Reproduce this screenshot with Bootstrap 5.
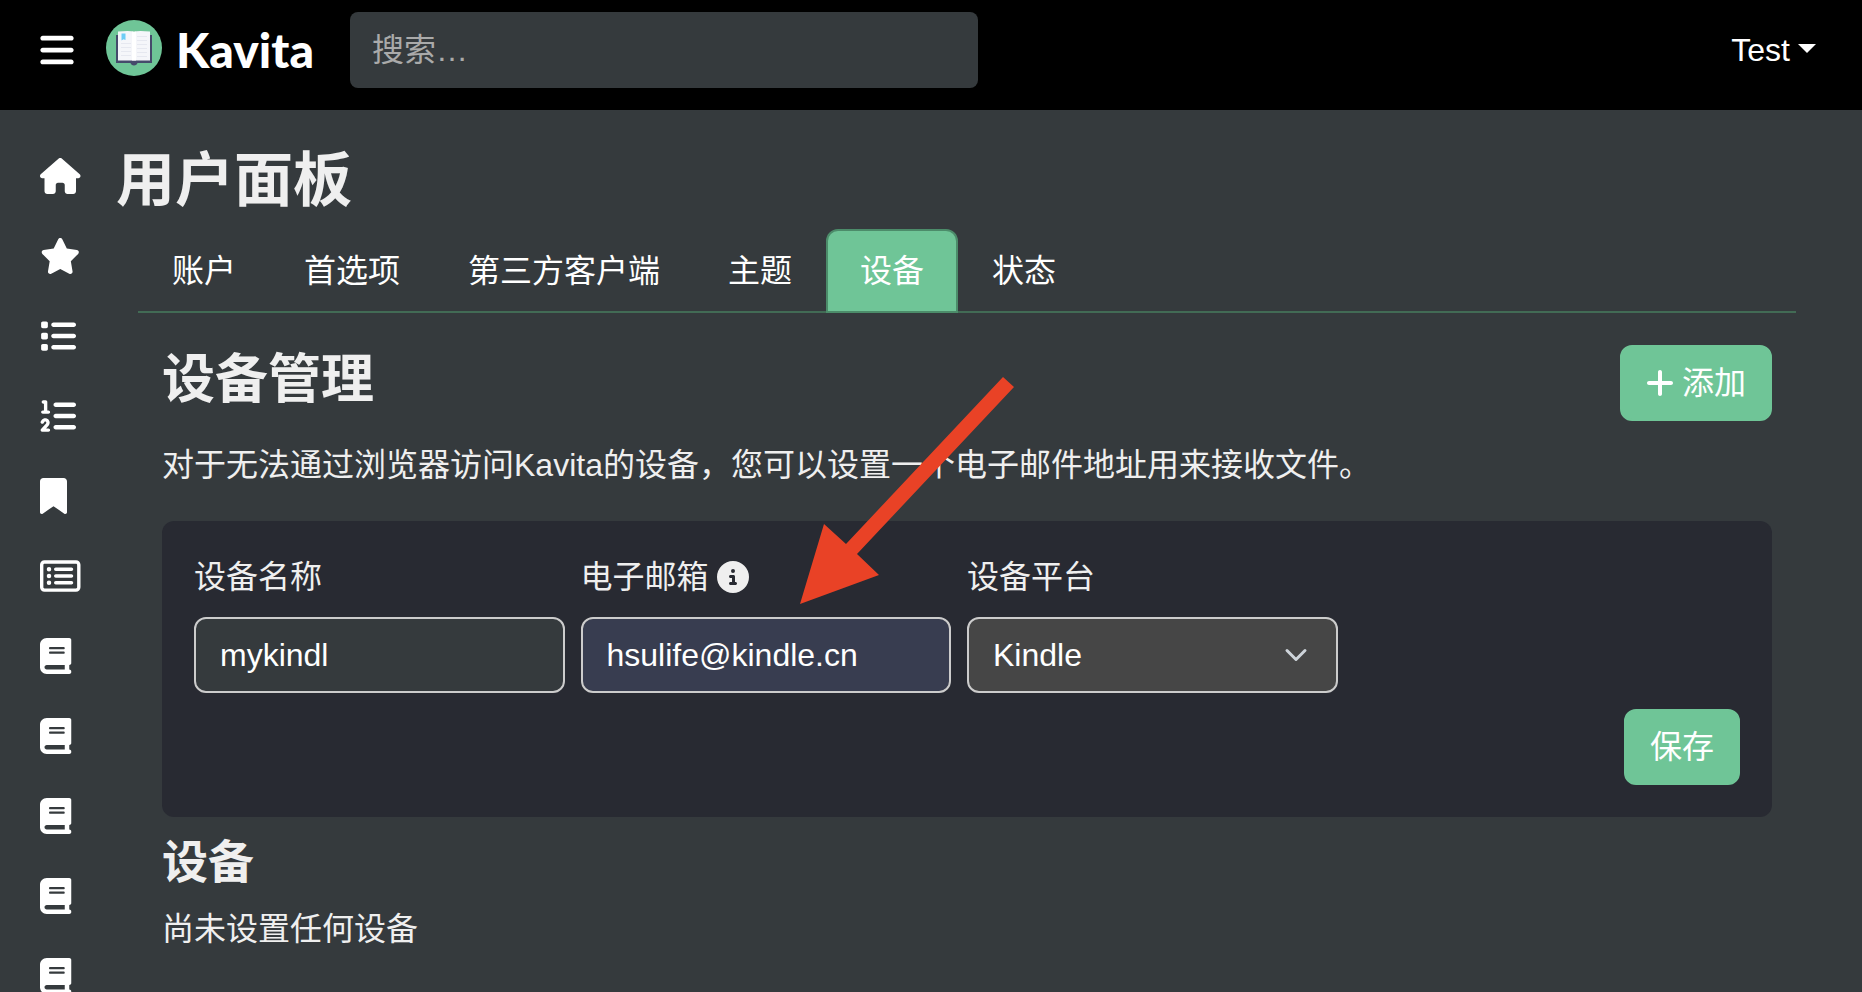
<!DOCTYPE html>
<html lang="zh-CN">
<head>
<meta charset="utf-8">
<meta name="viewport" content="width=device-width, initial-scale=1">
<title>Kavita - 用户面板</title>
<link href="https://cdn.jsdelivr.net/npm/bootstrap@5.3.0/dist/css/bootstrap.min.css" rel="stylesheet">
<style>
  :root { font-size: 32px; --kv-green: #6fc597; --kv-bg: #353a3d; --kv-text: #efefef; }
  body {
    font-family: "Liberation Sans", "Noto Sans CJK SC", sans-serif;
    background: var(--kv-bg); color: var(--kv-text); line-height: 48px;
  }
  .topbar { background: #000; padding: 12px 46px 22px 40px; }
  .menu-btn { width: 66px; color: #fff; line-height: 1; }
  .menu-btn svg { height: 38px; width: 34px; }
  .brand-link { flex: 0 0 244px; gap: 14px; padding-bottom: 4px; color: #fff; font: 900 48px/56px Lato, sans-serif; }
  .brand-link svg { width: 56px; height: 56px; }
  .brand-link span { padding-top: 4px; }
  .search-box { flex: 0 1 628px; }
  .form-control, .form-select { height: 76px; padding: 0 24px; border: 2px solid #ccc; border-radius: 12px; color: #fff; background-color: var(--kv-bg); }
  .form-control:focus { background-color: var(--kv-bg); color: #fff; }
  .search-box .form-control { border: 0; border-radius: 8px; padding: 0 22px; }
  .form-control::placeholder { color: #aaa; }
  .user-btn { color: #fff; line-height: 48px; }
  .side-nav { flex: 0 0 116px; padding: 26px 0 0 40px; }
  .side-nav a { display: flex; align-items: center; height: 80px; color: #fff; }
  .side-nav svg { height: 36px; }
  svg { fill: currentColor; display: block; }
  .page-title { font-size: 59px; line-height: 72px; font-weight: 700; margin-bottom: 12px; }
  .content { padding: 35px 66px 0 0; }
  .tab-area { padding-left: 22px; }
  .nav-tabs { border-bottom: 2px solid #426b55; }
  .nav-tabs .nav-link { color: #fff; border: 2px solid transparent; margin-bottom: -2px; padding: 16px 32px; border-radius: 12px 12px 0 0; }
  .nav-tabs .nav-link.active { background: var(--kv-green); border-color: #4c8c6a; color: #fff; }
  .panel { padding: 32px 24px; }
  .panel h3 { font-size: 53px; line-height: 70px; font-weight: 700; }
  .panel h4 { font-size: 46px; line-height: 58px; font-weight: 700; margin: 16px 0 14px; }
  .intro { margin: 20px 0 32px; }
  .btn-kv { --bs-btn-color: #fff; --bs-btn-bg: var(--kv-green); --bs-btn-border-color: var(--kv-green); --bs-btn-hover-color: #fff; --bs-btn-hover-bg: #5bb386; border-width: 2px; padding: 12px 24px; line-height: 48px; border-radius: 12px; }
  .btn-kv svg { width: 28px; height: 32px; }
  .device-form { background: #282a32; border-radius: 12px; padding: 32px; }
  .device-form label { margin-bottom: 16px; }
  .email-field { background-color: #383d50; }
  .form-select {
    background-color: #464646;
    background-image: url("data:image/svg+xml,%3csvg xmlns='http://www.w3.org/2000/svg' viewBox='0 0 16 16'%3e%3cpath fill='none' stroke='%23ced4da' stroke-linecap='round' stroke-linejoin='round' stroke-width='2' d='m2 5 6 6 6-6'/%3e%3c/svg%3e");
    background-size: 32px 24px;
  }
  .info-icon { width: 32px; height: 32px; }
  .pointer-arrow { position: absolute; left: 219px; bottom: 89px; width: 214px; height: 227px; z-index: 5; pointer-events: none; fill: #e94226; }
</style>
</head>
<body class="vh-100 overflow-hidden d-flex flex-column">

<svg class="d-none" aria-hidden="true">
  <symbol id="i-book" viewBox="0 0 448 512"><path d="M96 0C43 0 0 43 0 96V416c0 53 43 96 96 96H384h32c17.700 0 32-14.300 32-32s-14.300-32-32-32V384c17.700 0 32-14.300 32-32V32c0-17.700-14.300-32-32-32H384 96zm0 384H352v64H96c-17.700 0-32-14.300-32-32s14.300-32 32-32zm32-240c0-8.800 7.200-16 16-16H336c8.800 0 16 7.200 16 16s-7.200 16-16 16H144c-8.800 0-16-7.200-16-16zm16 48H336c8.800 0 16 7.200 16 16s-7.200 16-16 16H144c-8.800 0-16-7.200-16-16s7.200-16 16-16z"/></symbol>
</svg>

<header class="topbar d-flex align-items-center">
  <button class="menu-btn btn p-0 border-0 text-start" type="button" aria-label="菜单">
    <svg viewBox="0 0 448 512"><path d="M0 96C0 78.300 14.300 64 32 64H416c17.700 0 32 14.300 32 32s-14.300 32-32 32H32C14.300 128 0 113.700 0 96zM0 256c0-17.700 14.300-32 32-32H416c17.700 0 32 14.300 32 32s-14.300 32-32 32H32c-17.700 0-32-14.300-32-32zM448 416c0 17.700-14.300 32-32 32H32c-17.700 0-32-14.300-32-32s14.300-32 32-32H416c17.700 0 32 14.300 32 32z"/></svg>
  </button>
  <a class="brand-link d-flex align-items-center text-decoration-none" href="#">
    <svg viewBox="0 0 56 56" aria-hidden="true">
      <circle cx="28" cy="28" r="28" fill="#6fc597"/>
      <path d="M10 15h36v28H31.500c-.5 1.500-1.500 2.500-3.500 2.500s-3-1-3.500-2.500H10z" fill="#454a6b"/>
      <path d="M12 11.500q11-1 16 0 5-1 16 0V40.500H12z" fill="#f5f6fa"/>
      <path d="M26 11.500l2 .7 2-.7V40.500h-4z" fill="#fff"/>
      <path d="M15.500 13.500h4V20l-2-.8-2 1.300z" fill="#6fcdf5"/>
      <path d="M15 23.500h10M15 27.500h10M15 31.500h10M15 35.500h10M31 16.500h10M31 20.500h10M31 24.500h10M31 28.500h10M31 32.500h10M31 36.500h10" stroke="#e6e8f0" stroke-width="1" fill="none"/>
    </svg>
    <span>Kavita</span>
  </a>
  <form class="search-box" role="search">
    <input class="form-control" type="search" placeholder="搜索…" aria-label="搜索">
  </form>
  <button class="user-btn btn p-0 border-0 dropdown-toggle ms-auto" type="button" data-bs-toggle="dropdown" aria-expanded="false">Test</button>
</header>

<div class="d-flex flex-grow-1 overflow-hidden">
  <nav class="side-nav" aria-label="侧边栏">
    <a href="#" aria-label="主页"><svg viewBox="0 0 576 512"><path d="M575.800 255.500c0 18-15 32.100-32 32.100h-32l.7 160.200c0 2.700-.2 5.400-.5 8.100V472c0 22.100-17.900 40-40 40H456c-1.100 0-2.200 0-3.300-.1c-1.400 .1-2.800 .1-4.200 .1H416 392c-22.100 0-40-17.900-40-40V448 384c0-17.700-14.300-32-32-32H256c-17.700 0-32 14.300-32 32v64 24c0 22.100-17.900 40-40 40H160 128.100c-1.500 0-3-.1-4.500-.2c-1.200 .1-2.400 .2-3.600 .2H104c-22.100 0-40-17.900-40-40V360c0-.9 0-1.900 .1-2.800V287.600H32c-18 0-32-14-32-32.100c0-9 3-17 10-24L266.400 8c7-7 15-8 22-8s15 2 21 7L564.800 231.500c8 7 12 15 11 24z"/></svg></a>
    <a href="#" aria-label="想读"><svg viewBox="0 0 576 512"><path d="M316.900 18C311.600 7 300.400 0 288.100 0s-23.400 7-28.800 18L195 150.300 51.400 171.500c-12 1.800-22 10.200-25.700 21.700s-.7 24.200 7.900 32.700L137.800 329 113.200 474.700c-2 12 3 24.200 12.900 31.300s23 8 33.800 2.300l128.300-68.500 128.300 68.500c10.800 5.700 23.900 4.900 33.800-2.300s14.900-19.300 12.900-31.300L438.500 329 542.700 225.900c8.600-8.500 11.700-21.200 7.900-32.700s-13.700-19.900-25.700-21.700L381.200 150.300 316.900 18z"/></svg></a>
    <a href="#" aria-label="收藏"><svg viewBox="0 0 512 512"><path d="M40 48C26.700 48 16 58.700 16 72v48c0 13.300 10.700 24 24 24H88c13.300 0 24-10.700 24-24V72c0-13.300-10.700-24-24-24H40zM192 64c-17.700 0-32 14.300-32 32s14.300 32 32 32H480c17.700 0 32-14.300 32-32s-14.300-32-32-32H192zm0 160c-17.700 0-32 14.300-32 32s14.300 32 32 32H480c17.700 0 32-14.300 32-32s-14.300-32-32-32H192zm0 160c-17.700 0-32 14.300-32 32s14.300 32 32 32H480c17.700 0 32-14.300 32-32s-14.300-32-32-32H192zM16 232v48c0 13.300 10.700 24 24 24H88c13.300 0 24-10.700 24-24V232c0-13.300-10.700-24-24-24H40c-13.300 0-24 10.700-24 24zM40 368c-13.300 0-24 10.700-24 24v48c0 13.300 10.700 24 24 24H88c13.300 0 24-10.700 24-24V392c0-13.300-10.700-24-24-24H40z"/></svg></a>
    <a href="#" aria-label="阅读清单"><svg viewBox="0 0 512 512"><path d="M24 56c0-13.300 10.700-24 24-24H80c13.300 0 24 10.700 24 24V176h16c13.300 0 24 10.700 24 24s-10.700 24-24 24H40c-13.300 0-24-10.700-24-24s10.700-24 24-24H56V80H48C34.700 80 24 69.300 24 56zM86.700 341.200c-6.500-7.400-18.300-6.900-24 1.200L51.500 357.900c-7.700 10.800-22.700 13.300-33.500 5.600s-13.300-22.700-5.600-33.500l11.100-15.600c23.700-33.200 72.300-35.600 99.200-4.900c21.300 24.400 20.800 60.900-1.100 84.700L86.800 432H120c13.300 0 24 10.700 24 24s-10.700 24-24 24H32c-9.500 0-18.200-5.600-22-14.400s-2.100-18.900 4.300-25.900l72-78c5.300-5.800 5.400-14.600 .3-20.500zM224 64H480c17.700 0 32 14.300 32 32s-14.300 32-32 32H224c-17.700 0-32-14.300-32-32s14.300-32 32-32zm0 160H480c17.700 0 32 14.300 32 32s-14.300 32-32 32H224c-17.700 0-32-14.300-32-32s14.300-32 32-32zm0 160H480c17.700 0 32 14.300 32 32s-14.300 32-32 32H224c-17.700 0-32-14.300-32-32s14.300-32 32-32z"/></svg></a>
    <a href="#" aria-label="书签"><svg viewBox="0 0 384 512"><path d="M0 48V487.700C0 501.100 10.900 512 24.300 512c5 0 9.900-1.500 14-4.400L192 400 345.700 507.600c4.100 2.900 9 4.400 14 4.400c13.400 0 24.300-10.900 24.300-24.300V48c0-26.500-21.500-48-48-48H48C21.500 0 0 21.500 0 48z"/></svg></a>
    <a href="#" aria-label="所有系列"><svg viewBox="0 0 576 512"><path d="M64 80c-8.800 0-16 7.200-16 16V416c0 8.800 7.200 16 16 16H512c8.800 0 16-7.200 16-16V96c0-8.800-7.200-16-16-16H64zM0 96C0 60.700 28.700 32 64 32H512c35.300 0 64 28.700 64 64V416c0 35.300-28.700 64-64 64H64c-35.300 0-64-28.700-64-64V96zm96 64a32 32 0 1 1 64 0 32 32 0 1 1 -64 0zm104 0c0-13.300 10.700-24 24-24H448c13.300 0 24 10.700 24 24s-10.700 24-24 24H224c-13.300 0-24-10.700-24-24zm0 96c0-13.300 10.700-24 24-24H448c13.300 0 24 10.700 24 24s-10.700 24-24 24H224c-13.300 0-24-10.700-24-24zm0 96c0-13.300 10.700-24 24-24H448c13.300 0 24 10.700 24 24s-10.700 24-24 24H224c-13.300 0-24-10.700-24-24zm-72-64a32 32 0 1 1 0-64 32 32 0 1 1 0 64zM96 352a32 32 0 1 1 64 0 32 32 0 1 1 -64 0z"/></svg></a>
    <a href="#" aria-label="书库 1"><svg viewBox="0 0 448 512"><use href="#i-book"/></svg></a>
    <a href="#" aria-label="书库 2"><svg viewBox="0 0 448 512"><use href="#i-book"/></svg></a>
    <a href="#" aria-label="书库 3"><svg viewBox="0 0 448 512"><use href="#i-book"/></svg></a>
    <a href="#" aria-label="书库 4"><svg viewBox="0 0 448 512"><use href="#i-book"/></svg></a>
    <a href="#" aria-label="书库 5"><svg viewBox="0 0 448 512"><use href="#i-book"/></svg></a>
  </nav>

  <main class="content flex-grow-1">
    <h2 class="page-title">用户面板</h2>
    <div class="tab-area">
      <ul class="nav nav-tabs">
        <li class="nav-item"><a class="nav-link" href="#">账户</a></li>
        <li class="nav-item"><a class="nav-link" href="#">首选项</a></li>
        <li class="nav-item"><a class="nav-link" href="#">第三方客户端</a></li>
        <li class="nav-item"><a class="nav-link" href="#">主题</a></li>
        <li class="nav-item"><a class="nav-link active" aria-current="page" href="#">设备</a></li>
        <li class="nav-item"><a class="nav-link" href="#">状态</a></li>
      </ul>

      <section class="panel">
        <div class="d-flex justify-content-between align-items-start">
          <h3 class="mb-0">设备管理</h3>
          <button class="btn btn-kv d-flex align-items-center gap-1" type="button">
            <svg viewBox="0 0 448 512" aria-hidden="true"><path d="M256 80c0-17.700-14.300-32-32-32s-32 14.300-32 32V224H48c-17.700 0-32 14.300-32 32s14.300 32 32 32H192V432c0 17.700 14.300 32 32 32s32-14.300 32-32V288H400c17.700 0 32-14.300 32-32s-14.300-32-32-32H256V80z"/></svg>添加</button>
        </div>
        <p class="intro">对于无法通过浏览器访问Kavita的设备，您可以设置一个电子邮件地址用来接收文件。</p>

        <form class="device-form">
          <div class="row g-0">
            <div class="col-3 pe-2">
              <label class="d-block" for="device-name">设备名称</label>
              <input class="form-control" id="device-name" type="text" value="mykindl">
            </div>
            <div class="col-3 pe-2 position-relative">
              <label class="d-flex align-items-center gap-1" for="device-email">电子邮箱
                <svg class="info-icon" viewBox="0 0 512 512" aria-hidden="true"><path d="M256 512A256 256 0 1 0 256 0a256 256 0 1 0 0 512zM216 336h24V272H216c-13.300 0-24-10.700-24-24s10.700-24 24-24h48c13.300 0 24 10.700 24 24v88h8c13.300 0 24 10.700 24 24s-10.700 24-24 24H216c-13.300 0-24-10.700-24-24s10.700-24 24-24zm40-208a32 32 0 1 1 0 64 32 32 0 1 1 0-64z"/></svg>
              </label>
              <input class="form-control email-field" id="device-email" type="email" value="hsulife@kindle.cn">
              <svg class="pointer-arrow" viewBox="0 0 214 227" aria-hidden="true"><path d="M0 227L24 147 46 167 203 0 214 10 57 177 79 198z"/></svg>
            </div>
            <div class="col-3 pe-2">
              <label class="d-block" for="device-platform">设备平台</label>
              <select class="form-select" id="device-platform"><option>Kindle</option></select>
            </div>
          </div>
          <div class="d-flex justify-content-end mt-2">
            <button class="btn btn-kv" type="submit">保存</button>
          </div>
        </form>

        <h4>设备</h4>
        <p class="mb-0">尚未设置任何设备</p>
      </section>
    </div>
  </main>
</div>

<script src="https://cdn.jsdelivr.net/npm/bootstrap@5.3.0/dist/js/bootstrap.bundle.min.js"></script>
</body>
</html>
